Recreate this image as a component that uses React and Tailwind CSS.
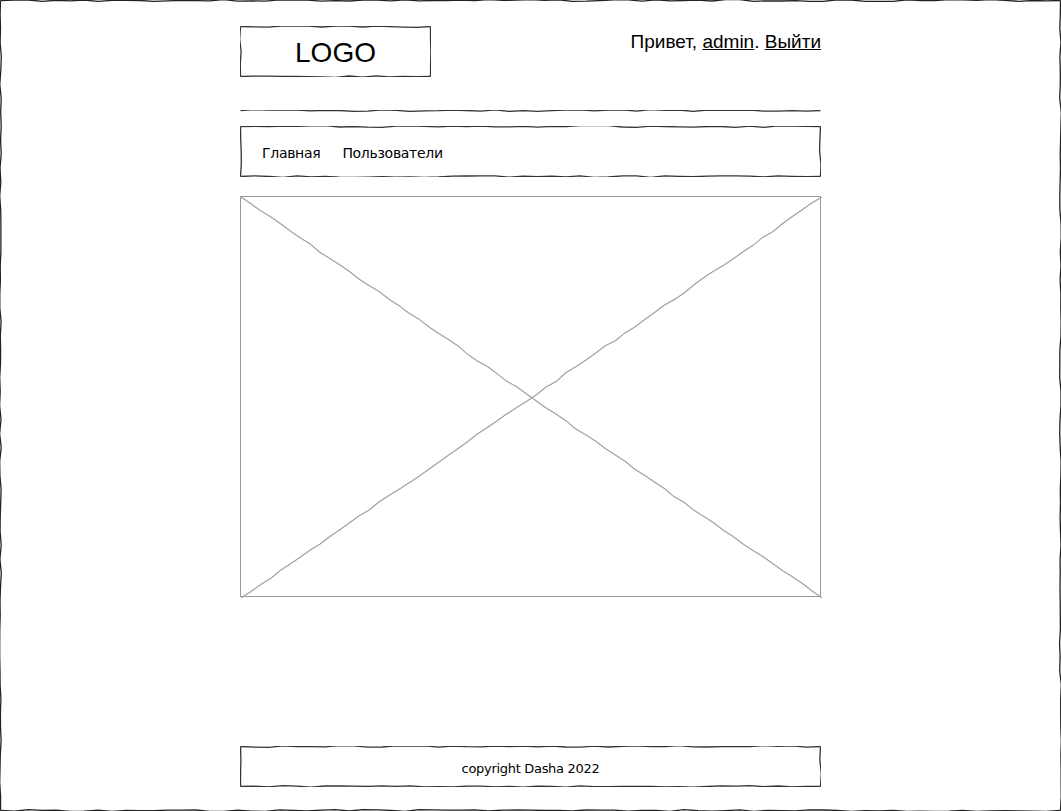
import React from "react";

// small seeded random so the sketchy lines stay the same on every render
const rnd = (seed) => {
  let s = seed;
  return () => {
    s = (s * 9301 + 49297) % 233280;
    return s / 233280;
  };
};

const wavyLine = (x1, y1, x2, y2, r, amp = 0.9, step = 14) => {
  const len = Math.hypot(x2 - x1, y2 - y1);
  const n = Math.max(2, Math.round(len / step));
  const nx = -(y2 - y1) / len;
  const ny = (x2 - x1) / len;
  let d = `M${x1} ${y1}`;
  for (let i = 1; i <= n; i++) {
    const t = i / n;
    const o = i === n ? 0 : (r() - 0.5) * 2 * amp;
    d += ` L${(x1 + (x2 - x1) * t + nx * o).toFixed(1)} ${(y1 + (y2 - y1) * t + ny * o).toFixed(1)}`;
  }
  return d;
};

const SketchBox = ({ w, h, seed = 1, color = "#333", sides = "trbl" }) => {
  const r = rnd(seed);
  const a = 0.5;
  const paths = [];
  if (sides.includes("t")) paths.push(wavyLine(a, a, w - a, a, r));
  if (sides.includes("r")) paths.push(wavyLine(w - a, a, w - a, h - a, r));
  if (sides.includes("b")) paths.push(wavyLine(w - a, h - a, a, h - a, r));
  if (sides.includes("l")) paths.push(wavyLine(a, h - a, a, a, r));
  return (
    <svg
      className="absolute inset-0 pointer-events-none"
      width={w}
      height={h}
      viewBox={`0 0 ${w} ${h}`}
    >
      {paths.map((d, i) => (
        <path key={i} d={d} fill="none" stroke={color} strokeWidth="1.3" />
      ))}
    </svg>
  );
};

const Placeholder = () => {
  const r = rnd(7);
  return (
    <div className="relative w-[581px] h-[401px] border border-[#999] mt-[19px]">
      <svg className="absolute inset-0" width="581" height="401" viewBox="0 0 581 401">
        <path d={wavyLine(0, 0, 581, 401, r, 0.8, 12)} fill="none" stroke="#a0a0a0" strokeWidth="1.2" />
        <path d={wavyLine(0, 401, 581, 0, r, 0.9, 12)} fill="none" stroke="#a0a0a0" strokeWidth="1.2" />
      </svg>
    </div>
  );
};

const App = () => {
  return (
    <div className="relative w-[1061px] h-[811px] bg-white overflow-hidden font-['Liberation_Sans',Arial,sans-serif] text-black">
      <SketchBox w={1061} h={811} seed={3} color="#222" />

      <div className="w-[581px] mx-auto pt-[26px] flex flex-col">
        <div className="flex justify-between items-start h-[51px]">
          <div className="relative w-[191px] h-[51px] flex items-center justify-center pt-[3px]">
            <SketchBox w={191} h={51} seed={11} />
            <span className="text-[28px] leading-none">LOGO</span>
          </div>
          <div className="text-[19px] leading-[22px] mt-[5px]">
            Привет, <a className="underline">admin</a>.{" "}
            <a className="underline">Выйти</a>
          </div>
        </div>

        <div className="relative h-[2px] mt-[33px]">
          <SketchBox w={581} h={2} seed={21} sides="t" />
        </div>

        <div className="relative h-[51px] mt-[14px] flex items-center gap-[22px] pl-[22px] pt-[3px] text-[14px] font-['DejaVu_Sans',Verdana,sans-serif] tracking-[-0.3px]">
          <SketchBox w={581} h={51} seed={31} />
          <span>Главная</span>
          <span>Пользователи</span>
        </div>

        <Placeholder />

        <div className="relative h-[41px] mt-[149px] flex items-center justify-center pt-[4px] text-[13px] font-['DejaVu_Sans',Verdana,sans-serif] tracking-[-0.3px]">
          <SketchBox w={581} h={41} seed={41} />
          <span>copyright Dasha 2022</span>
        </div>
      </div>
    </div>
  );
};

export default App;
